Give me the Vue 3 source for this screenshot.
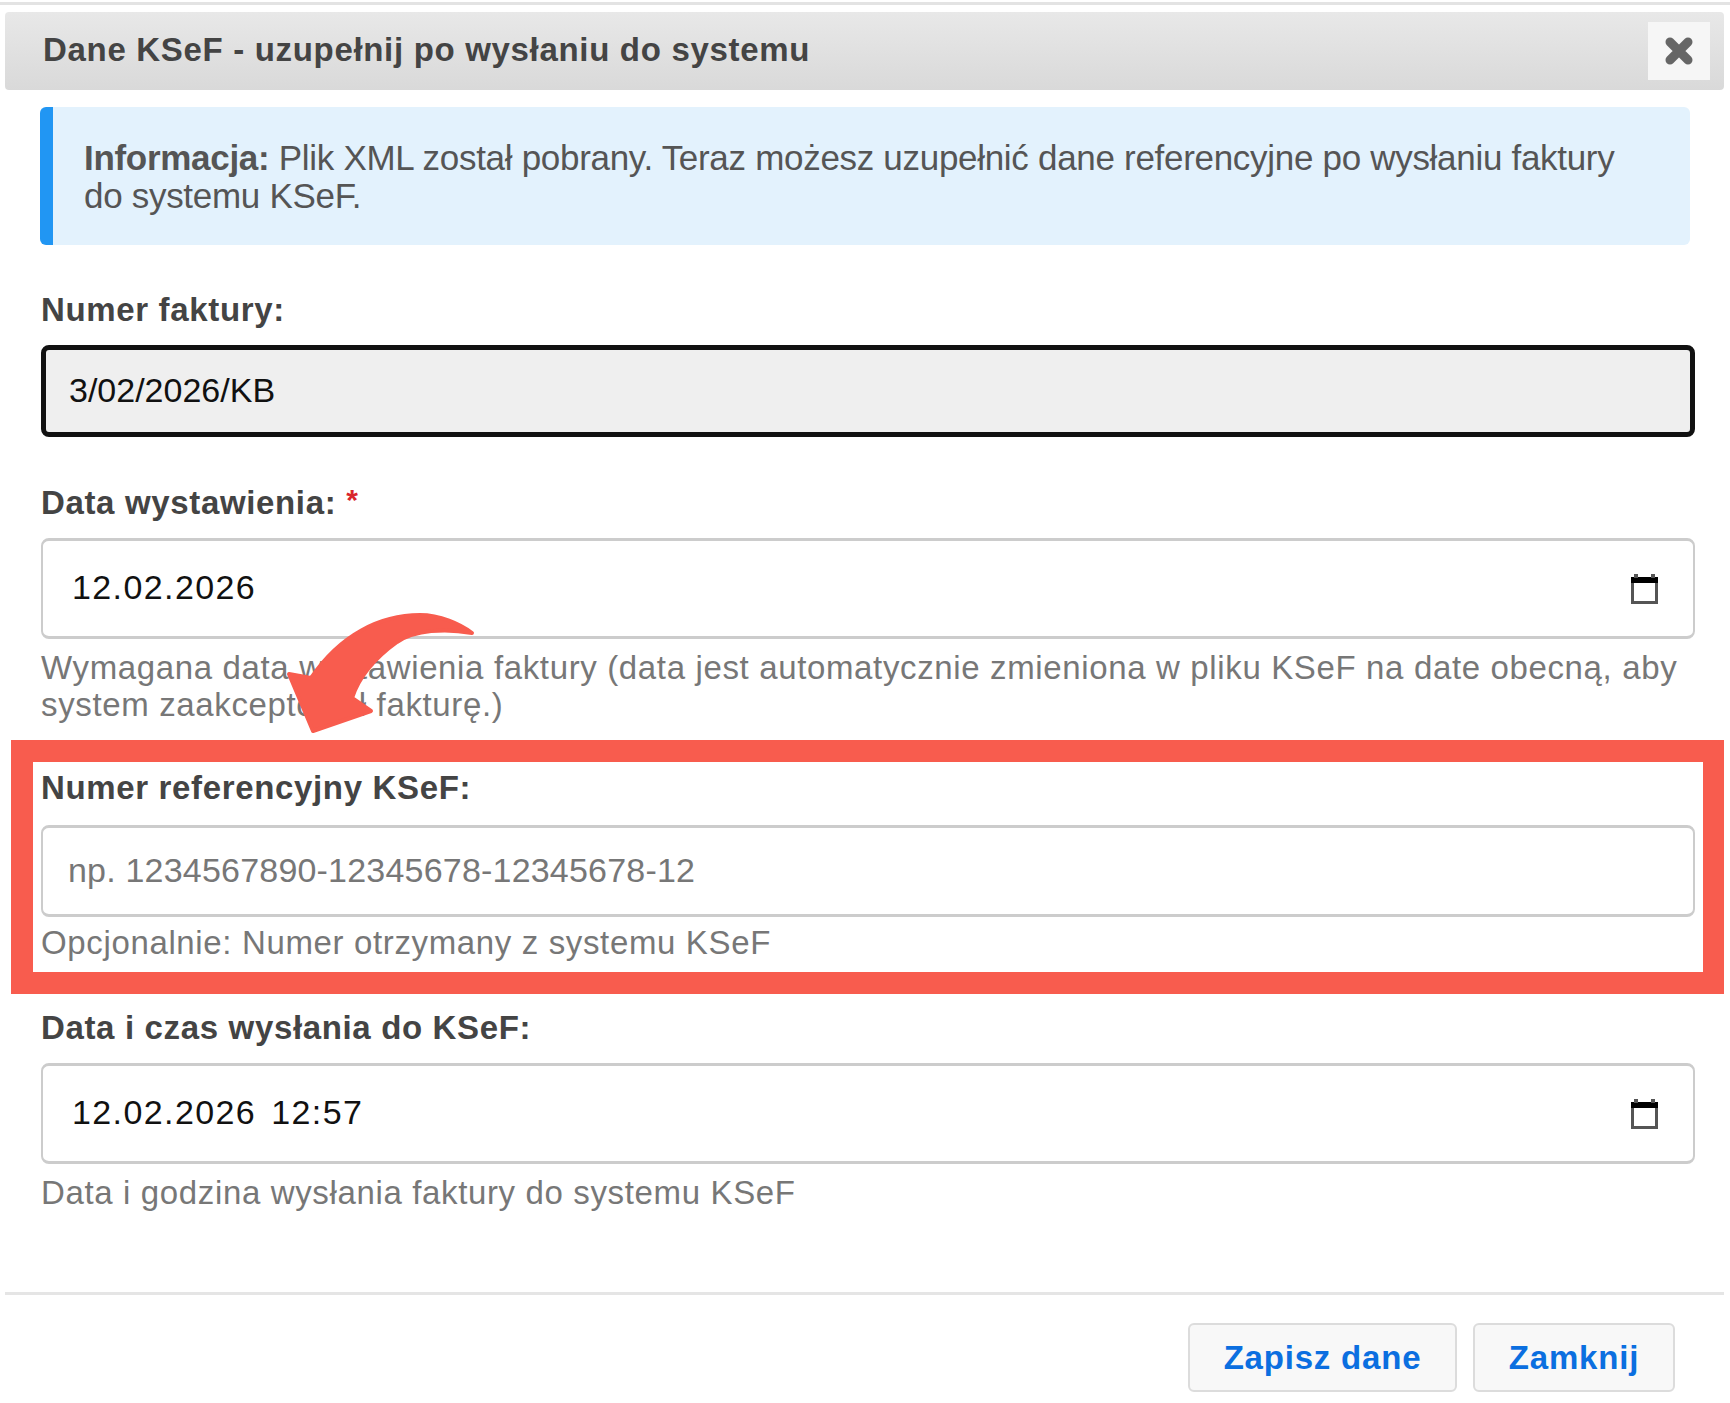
<script setup>
const title = 'Dane KSeF - uzupełnij po wysłaniu do systemu'
const invoiceNumber = '3/02/2026/KB'
const issueDate = '12.02.2026'
const sentDate = '12.02.2026'
const sentTime = '12:57'
</script>

<template>
  <div class="page">
    <div class="top-rule"></div>

    <div class="dialog-head">
      <span class="dialog-title">{{ title }}</span>
      <button class="close-btn" aria-label="Zamknij">
        <svg width="30" height="28" viewBox="0 0 30 28">
          <path d="M6 5 L24 23 M24 5 L6 23" stroke="#666" stroke-width="9" stroke-linecap="round" fill="none" />
        </svg>
      </button>
    </div>

    <div class="info-box">
      <strong>Informacja:</strong> Plik XML został pobrany. Teraz możesz uzupełnić dane referencyjne po wysłaniu faktury do systemu KSeF.
    </div>

    <div class="form">
      <label class="field-label first">Numer faktury:</label>
      <div class="field-input readonly">{{ invoiceNumber }}</div>

      <label class="field-label issue">Data wystawienia: <span class="required">*</span></label>
      <div class="field-input date">
        <span class="date-text">{{ issueDate }}</span>
        <svg class="calendar" viewBox="0 0 27 30" width="27" height="30">
          <path d="M1.5 5.5 H25.5 V28.5 H1.5 Z" fill="none" stroke="#555" stroke-width="3" />
          <rect x="0" y="3" width="27" height="6" fill="#000" />
          <rect x="3" y="0" width="4" height="4" fill="#555" />
          <rect x="20" y="0" width="4" height="4" fill="#555" />
        </svg>
      </div>
      <div class="hint two-line">Wymagana data wystawienia faktury (data jest automatycznie zmieniona w pliku KSeF na date obecną, aby system zaakceptował fakturę.)</div>

      <div class="highlight">
        <label class="field-label">Numer referencyjny KSeF:</label>
        <div class="field-input ref placeholder">np. 1234567890-12345678-12345678-12</div>
        <div class="hint ref-hint">Opcjonalnie: Numer otrzymany z systemu KSeF</div>
      </div>

      <label class="field-label sent">Data i czas wysłania do KSeF:</label>
      <div class="field-input date">
        <span class="date-text">{{ sentDate }}<span class="time-text">{{ sentTime }}</span></span>
        <svg class="calendar" viewBox="0 0 27 30" width="27" height="30">
          <path d="M1.5 5.5 H25.5 V28.5 H1.5 Z" fill="none" stroke="#555" stroke-width="3" />
          <rect x="0" y="3" width="27" height="6" fill="#000" />
          <rect x="3" y="0" width="4" height="4" fill="#555" />
          <rect x="20" y="0" width="4" height="4" fill="#555" />
        </svg>
      </div>
      <div class="hint">Data i godzina wysłania faktury do systemu KSeF</div>
    </div>

    <div class="dialog-foot">
      <button class="foot-btn save">Zapisz dane</button>
      <button class="foot-btn closing">Zamknij</button>
    </div>

    <svg class="arrow" viewBox="0 0 200 130" width="200" height="130">
      <path
        d="M192 23 C180 14 160 5 140 5 C100 5 60 25 31 68 L9 64 L33 121 L91 101 L72 88 C78 70 92 50 117 32 C135 20 165 18 192 23 Z"
        fill="#f85c4e"
        stroke="#f85c4e"
        stroke-width="4"
        stroke-linejoin="round"
      />
    </svg>
  </div>
</template>

<style>
html, body {
  background: #fff;
}
</style>

<style scoped>
.page {
  position: relative;
  width: 1730px;
  height: 1403px;
  padding-top: 2px;
  box-sizing: border-box;
  overflow: hidden;
  background: #fff;
  font-family: "Liberation Sans", Arial, sans-serif;
  font-size: 33px;
  color: #333;
}

.top-rule {
  height: 3px;
  background: #e3e3e3;
}

.dialog-head {
  display: flex;
  align-items: center;
  justify-content: space-between;
  height: 78px;
  margin: 7px 6px 0 5px;
  padding: 0 14px 0 38px;
  box-sizing: border-box;
  border-radius: 4px;
  background: linear-gradient(#e8e8e8, #d9d9d9);
}

.dialog-title {
  margin-bottom: 2px;
  font-size: 33px;
  font-weight: bold;
  letter-spacing: 0.68px;
  color: #444;
}

.close-btn {
  display: flex;
  align-items: center;
  justify-content: center;
  width: 62px;
  height: 58px;
  padding: 0;
  border: 0;
  background: #f6f6f6;
}

.info-box {
  width: 1650px;
  height: 138px;
  margin: 17px 0 0 40px;
  padding: 32px 30px 0 31px;
  box-sizing: border-box;
  border-left: 13px solid #2196f3;
  border-radius: 6px;
  background: #e3f2fd;
  font-size: 35px;
  line-height: 38px;
  letter-spacing: -0.3px;
  color: #555;
}

.form {
  padding: 0 35px 0 41px;
}

.field-label {
  display: block;
  height: 40px;
  font-size: 33px;
  line-height: 40px;
  font-weight: bold;
  letter-spacing: 0.65px;
  color: #444;
}

.field-label.first {
  margin-top: 45px;
}

.field-label.issue {
  margin-top: 46px;
}

.field-label.sent {
  margin-top: 14px;
}

.required {
  position: relative;
  top: -4px;
  font-size: 30px;
  color: #d9262c;
}

.field-input {
  display: flex;
  align-items: center;
  justify-content: space-between;
  height: 101px;
  margin-top: 15px;
  padding: 0 23px 2px 29px;
  box-sizing: border-box;
  border-style: solid;
  border-color: #ccc;
  border-width: 3px 2px;
  border-radius: 8px;
  background: #fff;
  font-size: 34px;
  color: #111;
}

.field-input.readonly {
  height: 92px;
  margin-top: 15px;
  padding-left: 23px;
  border: 5px solid #111;
  background: #efefef;
}

.field-input.ref {
  height: 92px;
  margin-top: 17px;
  padding-left: 25px;
  letter-spacing: 0.2px;
  color: #777;
}

.date-text {
  letter-spacing: 1.4px;
}

.time-text {
  margin-left: 15px;
}

.calendar {
  flex: none;
  margin-right: 12px;
  margin-top: 2px;
}

.hint {
  margin-top: 10px;
  font-size: 33px;
  line-height: 37px;
  letter-spacing: 0.64px;
  color: #777;
}

.two-line {
  margin-top: 10px;
}

.highlight {
  margin: 17px -29px 0 -30px;
  padding: 6px 8px 11px;
  border: 22px solid #f85c4e;
  border-right-width: 21px;
}

.ref-hint {
  margin-top: 7px;
}

.dialog-foot {
  display: flex;
  justify-content: flex-end;
  gap: 16px;
  margin: 81px 6px 0 5px;
  padding: 28px 49px 0 0;
  border-top: 3px solid #e5e5e5;
}

.foot-btn {
  height: 69px;
  padding: 0;
  border: 2px solid #dcdcdc;
  border-radius: 6px;
  background: #f8f8f8;
  font-family: "Liberation Sans", Arial, sans-serif;
  font-size: 33px;
  font-weight: bold;
  letter-spacing: 0.8px;
  color: #0b6fe0;
}

.save {
  width: 269px;
}

.closing {
  width: 202px;
}

.arrow {
  position: absolute;
  left: 280px;
  top: 610px;
}
</style>
